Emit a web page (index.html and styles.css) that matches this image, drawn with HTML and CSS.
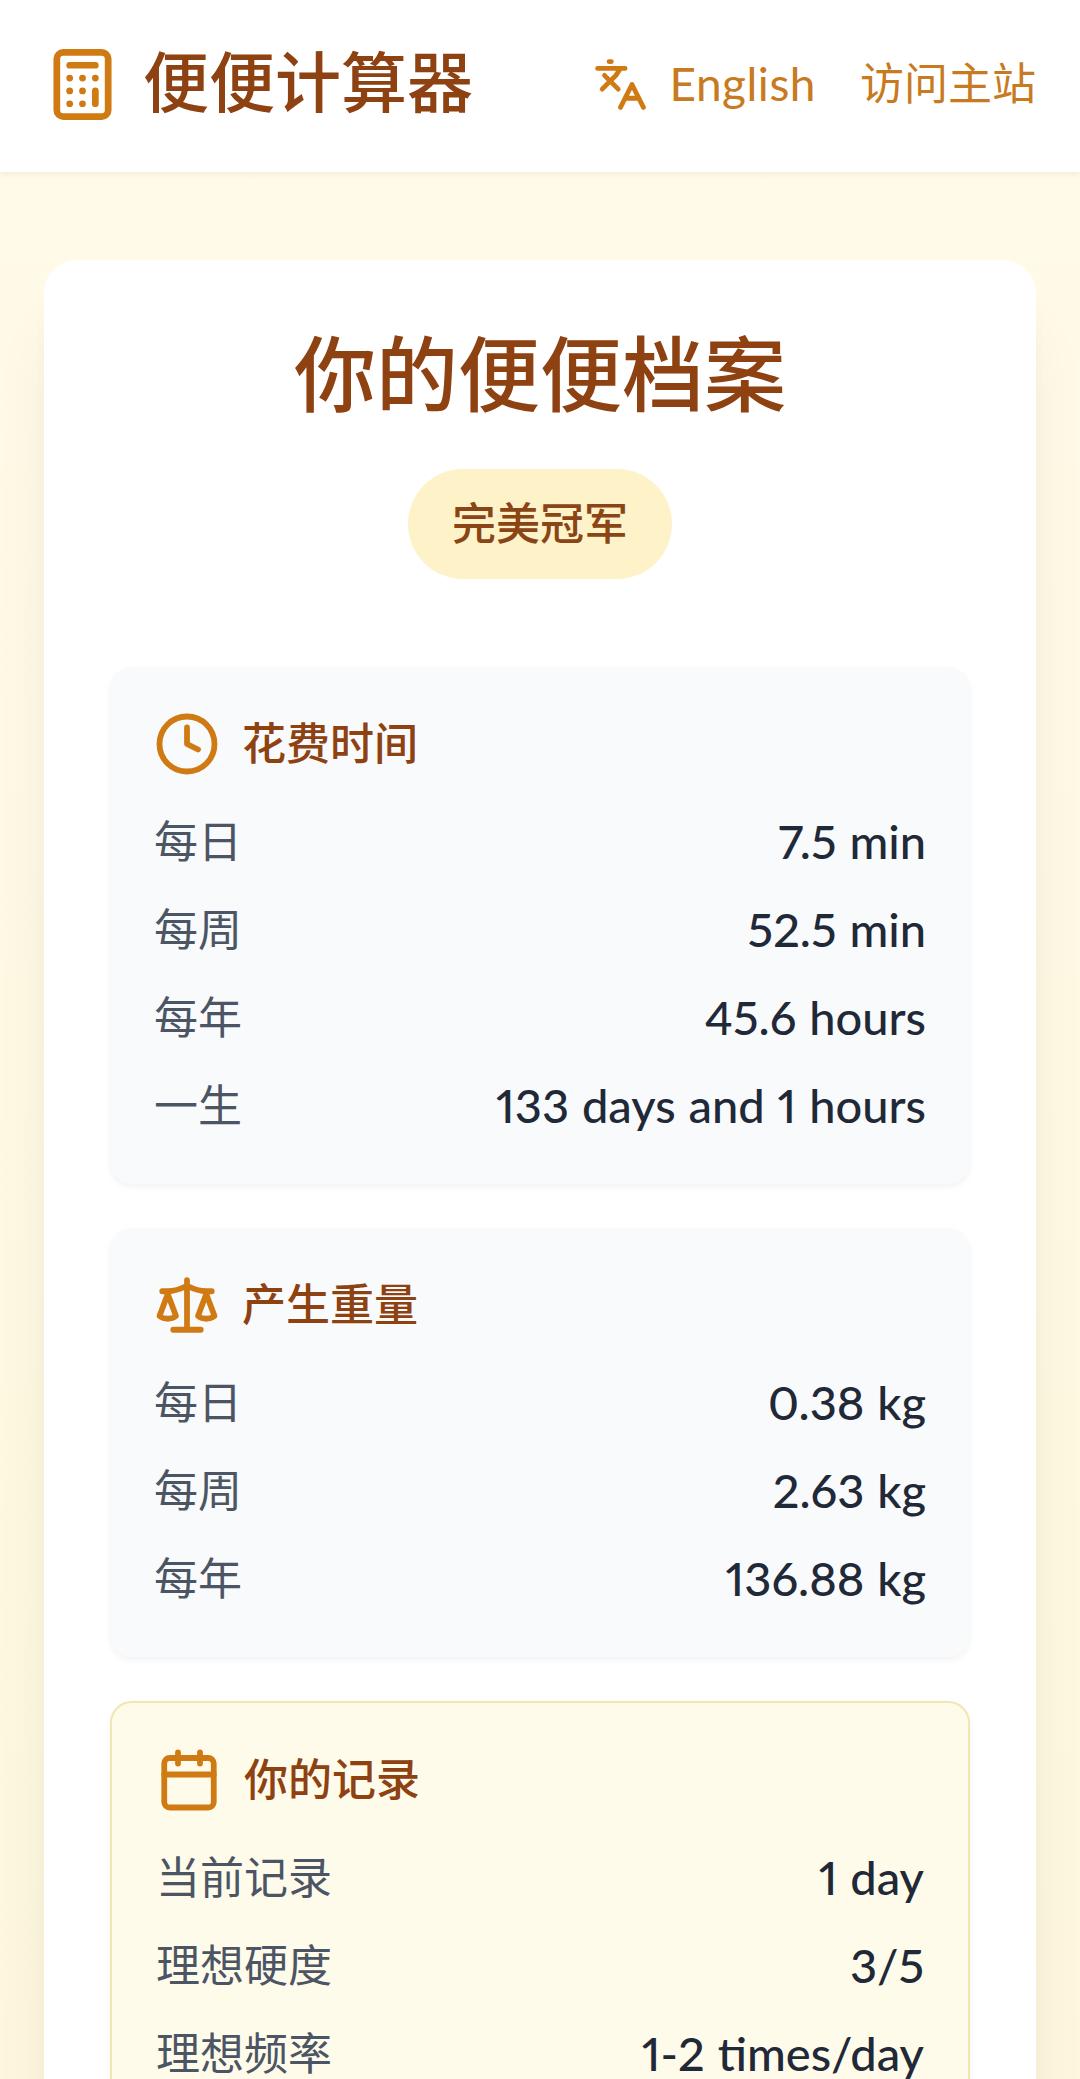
FILE: index.html
```html
<!DOCTYPE html>
<html lang="zh-CN">
<head>
  <meta charset="UTF-8">
  <meta name="viewport" content="width=device-width, initial-scale=1.0">
  <title>便便计算器</title>
  <link rel="stylesheet" href="styles.css">
</head>
<body>
  <header class="header">
    <div class="logo">
      <svg class="icon icon-logo" viewBox="0 0 24 24">
        <rect x="4" y="2" width="16" height="20" rx="2"/>
        <path d="M8 6h8M16 14v4M16 10h.01M12 10h.01M8 10h.01M12 14h.01M8 14h.01M12 18h.01M8 18h.01"/>
      </svg>
      <h1>便便计算器</h1>
    </div>
    <nav class="nav">
      <a class="nav-link" href="#">
        <svg class="icon icon-lang" viewBox="0 0 24 24">
          <path d="m5 8 6 6M4 14l6-6 2-3M2 5h12M7 2h1M22 22l-5-10-5 10M14 18h6"/>
        </svg>
        <span class="nav-english">English</span>
      </a>
      <a class="nav-link" href="#"><span>访问主站</span></a>
    </nav>
  </header>

  <main class="main">
    <div class="profile">
      <h2>你的便便档案</h2>
      <span class="badge">完美冠军</span>

      <div class="cards">
        <section class="card">
          <div class="card-title">
            <svg class="icon" viewBox="0 0 24 24">
              <circle cx="12" cy="12" r="10"/>
              <path d="M12 6v6l4 2"/>
            </svg>
            <h3>花费时间</h3>
          </div>
          <div class="row"><span>每日</span><span class="value">7.5 min</span></div>
          <div class="row"><span>每周</span><span class="value">52.5 min</span></div>
          <div class="row"><span>每年</span><span class="value">45.6 hours</span></div>
          <div class="row"><span>一生</span><span class="value">133 days and 1 hours</span></div>
        </section>

        <section class="card">
          <div class="card-title">
            <svg class="icon" viewBox="0 0 24 24">
              <path d="m16 16 3-8 3 8c-.87.65-1.92 1-3 1s-2.13-.35-3-1Z"/>
              <path d="m2 16 3-8 3 8c-.87.65-1.92 1-3 1s-2.13-.35-3-1Z"/>
              <path d="M7 21h10M12 3v18M3 7h2c2 0 5-1 7-2 2 1 5 2 7 2h2"/>
            </svg>
            <h3>产生重量</h3>
          </div>
          <div class="row"><span>每日</span><span class="value">0.38 kg</span></div>
          <div class="row"><span>每周</span><span class="value">2.63 kg</span></div>
          <div class="row"><span>每年</span><span class="value">136.88 kg</span></div>
        </section>

        <section class="card card-record">
          <div class="card-title">
            <svg class="icon" viewBox="0 0 24 24">
              <path d="M8 2v4M16 2v4M3 10h18"/>
              <rect x="3" y="4" width="18" height="18" rx="2"/>
            </svg>
            <h3>你的记录</h3>
          </div>
          <div class="row"><span>当前记录</span><span class="value">1 day</span></div>
          <div class="row"><span>理想硬度</span><span class="value">3/5</span></div>
          <div class="row"><span>理想频率</span><span class="value">1-2 times/day</span></div>
        </section>
      </div>
    </div>
  </main>
</body>
</html>
```

FILE: styles.css
```css
* {
  box-sizing: border-box;
  margin: 0;
  padding: 0;
}
body {
  height: 100vh;
  overflow: hidden;
  font-family: Lato, "Noto Sans CJK SC", sans-serif;
  font-size: 44px;
  line-height: 66px;
  background: linear-gradient(to bottom, #fffbe9, #fef7de);
}
h1, h2, h3 {
  font-weight: 500;
  color: #8e4111;
}
.icon {
  flex: none;
  width: 66px;
  height: 66px;
  fill: none;
  stroke: #d07a14;
  stroke-width: 2.1;
  stroke-linecap: round;
  stroke-linejoin: round;
}
.header {
  display: flex;
  justify-content: space-between;
  align-items: center;
  height: 172px;
  padding: 0 44px 3px;
  background: #fff;
  box-shadow: 0 3px 6px rgba(0, 0, 0, 0.05);
}
.logo {
  display: flex;
  align-items: center;
  gap: 22px;
}
.logo h1 {
  font-size: 66px;
  line-height: 88px;
  padding-bottom: 5px;
}
.icon-logo {
  width: 77px;
  height: 77px;
}
.nav {
  display: flex;
  gap: 44px;
}
.nav-link {
  display: flex;
  align-items: center;
  gap: 22px;
  color: #c87a20;
  text-decoration: none;
}
.nav-link span {
  padding-bottom: 3px;
}
.icon-lang {
  width: 55px;
  height: 55px;
}
.nav-link .nav-english {
  padding-bottom: 1px;
  font-size: 46px;
  letter-spacing: 0.5px;
}
.main {
  padding: 88px 44px;
}
.profile {
  display: flex;
  flex-direction: column;
  align-items: center;
  padding: 66px;
  background: #fff;
  border-radius: 33px;
  box-shadow: 0 55px 69px -14px rgba(0, 0, 0, 0.08), 0 22px 28px -16px rgba(0, 0, 0, 0.08);
}
.profile h2 {
  font-size: 82px;
  line-height: 95px;
  margin-bottom: 48px;
}
.badge {
  padding: 21px 44px 23px;
  font-weight: 500;
  color: #8a4415;
  background: #fdf2c8;
  border-radius: 55px;
}
.cards {
  display: flex;
  flex-direction: column;
  gap: 44px;
  width: 100%;
  margin-top: 88px;
}
.card {
  display: flex;
  flex-direction: column;
  gap: 22px;
  padding: 44px;
  background: #f9fafc;
  border-radius: 22px;
  box-shadow: 0 3px 6px rgba(0, 0, 0, 0.05);
}
.card-record {
  background: #fffbea;
  border: 2px solid #f0e7ae;
}
.card-title {
  display: flex;
  align-items: center;
  gap: 22px;
  margin-bottom: 11px;
}
.card-title h3 {
  font-size: 44px;
  line-height: 64px;
  padding-bottom: 2px;
}
.row {
  display: flex;
  justify-content: space-between;
  height: 66px;
  line-height: 63px;
  color: #4b5563;
}
.value {
  font-size: 47px;
  font-weight: 500;
  font-variant-numeric: proportional-nums;
  word-spacing: 1px;
  color: #1f2937;
}
```
